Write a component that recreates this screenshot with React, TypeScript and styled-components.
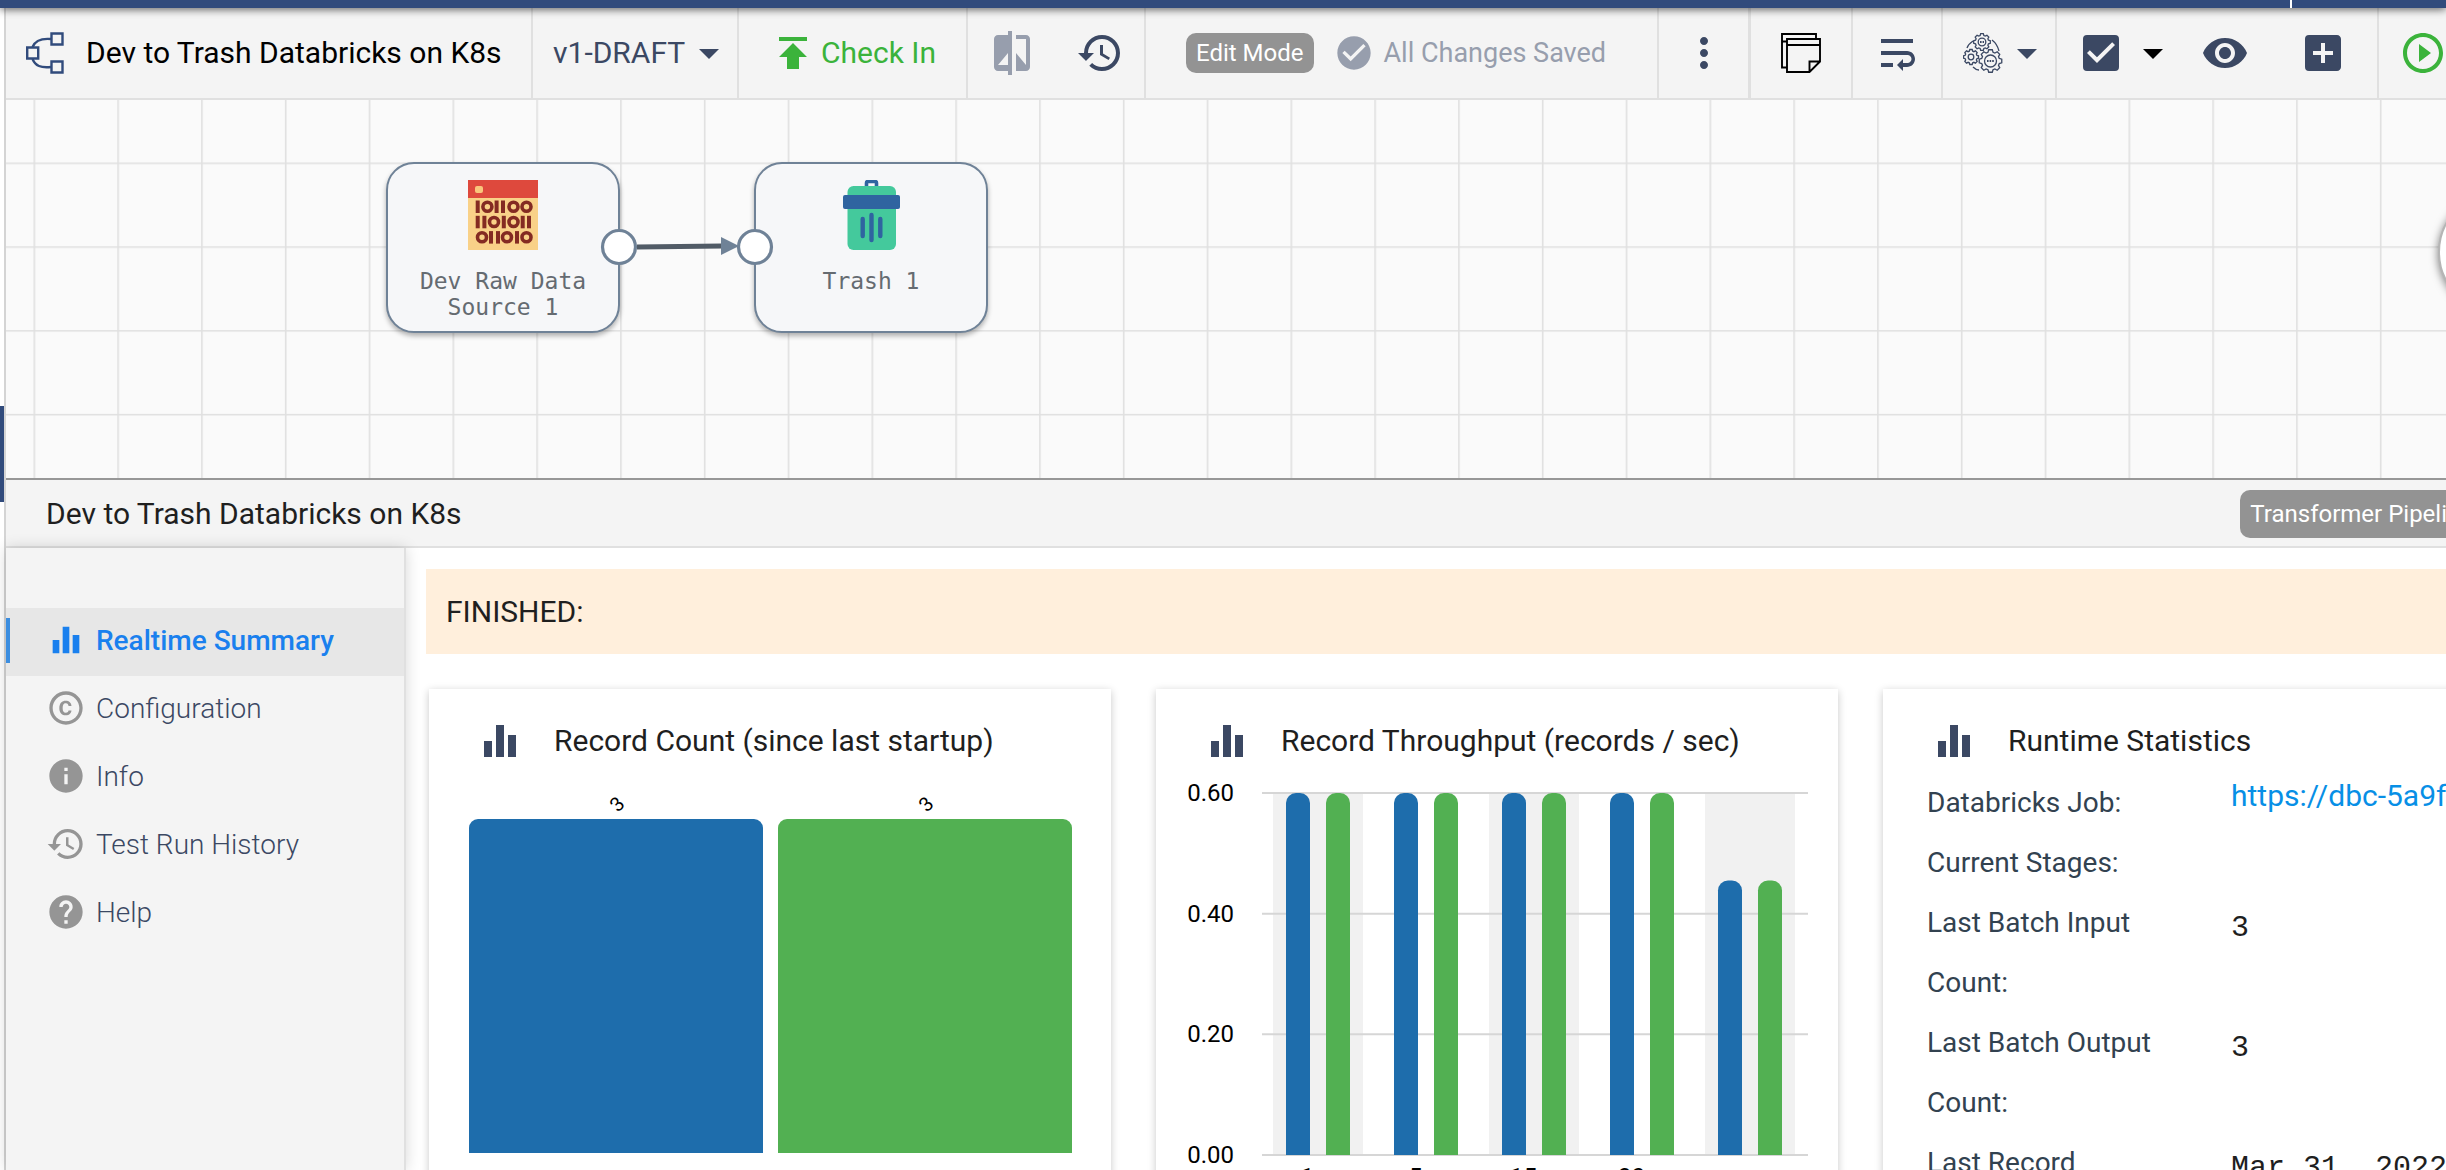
import React from 'react';
import styled, { createGlobalStyle, css } from 'styled-components';
import {
  MdAddBox,
  MdArrowDropDown,
  MdCheckBox,
  MdCheckCircle,
  MdCompare,
  MdCopyright,
  MdEqualizer,
  MdHelp,
  MdHistory,
  MdInfo,
  MdMoreVert,
  MdPlayCircleOutline,
  MdPublish,
  MdVisibility,
  MdWrapText,
} from 'react-icons/md';

const color = {
  brand: '#314b7c',
  navy: '#3b4863',
  muted: '#979ead',
  green: '#3bb33b',
  line: '#e0e0e0',
  panel: '#f4f4f4',
  chip: '#939393',
  active: '#1a80ee',
  chartBlue: '#1e6dac',
  chartGreen: '#52b052',
  node: '#6f8297',
};

const GlobalStyle = createGlobalStyle`
  *, *::before, *::after { box-sizing: border-box; }
  html, body { margin: 0; overflow: hidden; }
  body { font-family: Roboto, "Liberation Sans", sans-serif; font-size: 30px; color: #1f1f1f; background: #fff; }
  button { font: inherit; color: inherit; background: none; border: 0; padding: 0; margin: 0; cursor: pointer; }
  svg { display: block; flex-shrink: 0; }
`;

const Shell = styled.div`
  display: flex;
  flex-direction: column;
  height: 100vh;
  overflow: hidden;
`;

const TopBar = styled.header`
  display: flex;
  justify-content: flex-end;
  flex-shrink: 0;
  height: 8px;
  padding-right: 154px;
  background: ${color.brand};
  box-shadow: 0 1px 8px rgba(0, 0, 0, 0.7);
  z-index: 2;
`;

const TopBarMark = styled.span`
  width: 2px;
  background: #fff;
`;

const Body = styled.div`
  display: flex;
  flex: 1;
  min-height: 0;
`;

const Rail = styled.div`
  flex-shrink: 0;
  width: 6px;
  padding-top: 398px;
  border-right: 2px solid #d4d4d4;
  background: #fff;
`;

const RailMarker = styled.div`
  height: 96px;
  background: ${color.brand};
`;

const Workspace = styled.main`
  display: flex;
  flex-direction: column;
  flex: 1 0 auto;
  min-width: 2600px;
`;

const Toolbar = styled.div`
  display: flex;
  flex-shrink: 0;
  height: 92px;
  background: ${color.panel};
  border-bottom: 2px solid ${color.line};
`;

const Group = styled.div<{ $width?: number; $start?: number; $gap?: number; $edge?: number }>`
  display: flex;
  align-items: center;
  flex-shrink: 0;
  gap: ${(p) => p.$gap ?? 0}px;
  width: ${(p) => (p.$width ? `${p.$width}px` : 'auto')};
  ${(p) =>
    p.$start
      ? css`
          padding-left: ${p.$start}px;
        `
      : css`
          justify-content: center;
        `}
  border-right: ${(p) => p.$edge ?? 2}px solid ${color.line};
`;

const PipelineTitle = styled.h1`
  margin: 0;
  font-size: 30px;
  font-weight: 400;
  line-height: 40px;
  color: #000;
  white-space: nowrap;
`;

const ToolButton = styled.button<{ $color?: string; $gap?: number; $push?: number }>`
  display: flex;
  align-items: center;
  gap: ${(p) => p.$gap ?? 0}px;
  margin-left: ${(p) => p.$push ?? 0}px;
  line-height: 40px;
  color: ${(p) => p.$color ?? color.navy};
  white-space: nowrap;
`;

const Chip = styled.span<{ $tall?: boolean }>`
  padding: 0 10px;
  border-radius: 10px;
  background: ${color.chip};
  color: #fff;
  font-size: 24px;
  line-height: ${(p) => (p.$tall ? 48 : 40)}px;
  white-space: nowrap;
`;

const SaveState = styled.span`
  display: flex;
  align-items: center;
  gap: 10px;
  font-size: 27px;
  color: ${color.muted};
  white-space: nowrap;
`;

const Canvas = styled.section`
  position: relative;
  flex-shrink: 0;
  height: 378px;
  background: #fafafa;
  overflow: hidden;
`;

const CanvasLayer = styled.svg`
  position: absolute;
  inset: 0;
  width: 100%;
  height: 100%;
`;

const Node = styled.button<{ $x: number; $y: number }>`
  position: absolute;
  left: ${(p) => p.$x}px;
  top: ${(p) => p.$y}px;
  display: flex;
  flex-direction: column;
  align-items: center;
  gap: 18px;
  width: 234px;
  height: 171px;
  padding-top: 16px;
  border: 2px solid ${color.node};
  border-radius: 28px;
  background: #f6f7f9;
  box-shadow: 0 3px 5px rgba(0, 0, 0, 0.3);
`;

const NodeLabel = styled.span`
  width: 190px;
  font-family: "DejaVu Sans Mono", monospace;
  font-size: 23px;
  line-height: 26px;
  color: #656b71;
`;

const PanButton = styled.button`
  position: absolute;
  top: 92px;
  right: 48px;
  display: flex;
  align-items: center;
  width: 120px;
  height: 120px;
  padding-left: 6px;
  border: 2px solid #b5b5b5;
  border-radius: 50%;
  background: #fff;
  box-shadow: 0 2px 8px rgba(0, 0, 0, 0.5);
`;

const DetailHeader = styled.div`
  display: flex;
  align-items: center;
  justify-content: space-between;
  flex-shrink: 0;
  height: 70px;
  padding: 2px 123px 0 40px;
  border-top: 2px solid #979797;
  border-bottom: 2px solid ${color.line};
  background: ${color.panel};
`;

const DetailTitle = styled.h2`
  margin: 0;
  font-size: 30px;
  font-weight: 400;
  line-height: 40px;
`;

const Detail = styled.div`
  display: flex;
  flex: 1;
  min-height: 0;
`;

const SideNav = styled.nav`
  flex-shrink: 0;
  width: 400px;
  padding-top: 60px;
  border-right: 2px solid ${color.line};
  background: ${color.panel};
  box-shadow: 0 0 14px rgba(0, 0, 0, 0.16);
`;

const NavLink = styled.a<{ $active?: boolean }>`
  display: flex;
  align-items: center;
  gap: 10px;
  height: 68px;
  padding-bottom: 4px;
  font-size: 28px;
  font-weight: ${(p) => (p.$active ? 500 : 300)};
  color: ${(p) => (p.$active ? color.active : color.navy)};
  background: ${(p) => (p.$active ? '#e7e7e7' : 'transparent')};
  text-decoration: none;

  &::before {
    content: '';
    width: 4px;
    height: 45px;
    margin-right: 26px;
    background: ${(p) => (p.$active ? '#3c8ee0' : 'transparent')};
  }

  svg {
    color: ${(p) => (p.$active ? color.active : '#959595')};
  }
`;

const Content = styled.div`
  flex: 1;
  min-width: 0;
  padding: 21px 20px;
  overflow: hidden;
`;

const Alert = styled.div`
  padding: 0 20px;
  background: #ffefdc;
  line-height: 85px;
`;

const Cards = styled.div`
  display: grid;
  grid-template-columns: repeat(3, 1fr);
  gap: 45px;
  padding: 35px 21px 0 3px;
`;

const Card = styled.article`
  min-width: 0;
  background: #fff;
  box-shadow: 0 2px 8px rgba(0, 0, 0, 0.22);
`;

const CardHeader = styled.header`
  display: flex;
  align-items: center;
  gap: 30px;
  height: 83px;
  padding: 28px 47px 7px;
  color: ${color.navy};
`;

const CardTitle = styled.h3`
  margin: 0;
  font-size: 30px;
  font-weight: 400;
  line-height: 40px;
  color: #1f1f1f;
  white-space: nowrap;
`;

const Chart = styled.svg`
  width: 100%;
  font-size: 24px;
`;

const Stats = styled.dl`
  display: grid;
  grid-template-columns: 260px 1fr;
  column-gap: 44px;
  margin: 0;
  padding: 1px 0 0 44px;
`;

const StatLabel = styled.dt`
  font-size: 28px;
  line-height: 60px;
  color: #324250;
`;

const StatValue = styled.dd`
  margin: 0;
  overflow: hidden;
  font-family: "Liberation Mono", monospace;
  line-height: 70px;
  white-space: nowrap;
`;

const JobLink = styled.a`
  display: block;
  font-family: Roboto, "Liberation Sans", sans-serif;
  line-height: 46px;
  color: #078fe6;
  text-decoration: none;
`;

const PipelineIcon = () => (
  <svg width="38" height="42" viewBox="0 0 38 42" fill="none" stroke={color.brand} strokeWidth="2.4">
    <path d="M25 7C14 6 9 9 6.500 15M6.500 27c3 7 8 9 18.500 8" />
    <path d="M25.500 1.500h11v11h-11zM1.200 15.500h11v11h-11zM25.500 29.500h11v11h-11z" />
  </svg>
);

const NotesIcon = () => (
  <svg width="40" height="40" viewBox="0 0 40 40" fill="none" stroke="#000" strokeWidth="1.900">
    <path d="M6 34.500H1V1h34v5M1 8.500h5" />
    <path d="M6 6h33v22.500L28.500 39H6zM6 12h33M28.500 39V28.500H39" />
  </svg>
);

const gearPath = (cx: number, cy: number, r: number, teeth: number) => {
  const points: string[] = [];
  for (let i = 0; i < teeth; i += 1) {
    [-0.36, -0.2, 0.2, 0.36].forEach((offset, k) => {
      const angle = ((i + offset) / teeth) * Math.PI * 2;
      const radius = k === 1 || k === 2 ? r : r * 0.8;
      points.push(`${(cx + Math.cos(angle) * radius).toFixed(2)} ${(cy + Math.sin(angle) * radius).toFixed(2)}`);
    });
  }
  return `M${points.join('L')}Z`;
};

const GearsIcon = () => (
  <svg width="40" height="40" viewBox="0 0 40 40" fill="none" stroke={color.navy} strokeWidth="1.300">
    <path d={gearPath(19, 9, 8.4, 8)} />
    <circle cx="19" cy="9" r="3.800" />
    <path d={gearPath(8, 24, 7.600, 8)} />
    <circle cx="8" cy="24" r="2.800" />
    <path d={gearPath(27.500, 28, 11.400, 8)} />
    <circle cx="27.500" cy="28" r="6" />
    <path d="M4 15c1-3 3-5 6-7M29 7c4 3 6 7 7 11M10 34c2 2 4 3 6 3" />
    <path d="M17 9h4M24 28h7" strokeWidth="1.800" strokeDasharray="1.600 1" />
  </svg>
);

type Glyph = ['I' | 'O', number];
const binaryRows: Glyph[][] = [
  [['I', 9.7], ['O', 19.4], ['I', 28.6], ['I', 35], ['O', 45.5], ['O', 58.5]],
  [['I', 9.7], ['I', 16.4], ['O', 26], ['I', 35.8], ['O', 45.5], ['I', 54.7], ['I', 61]],
  [['O', 14], ['I', 23], ['I', 30], ['O', 39], ['I', 49], ['O', 58.5]],
];

const RawDataIcon = () => (
  <svg width="70" height="70" viewBox="0 0 70 70">
    <rect width="70" height="70" fill="#f9d188" />
    <rect width="70" height="18" fill="#de493d" />
    <rect x="7" y="6" width="8" height="7" rx="2" fill="#f9c67c" />
    {binaryRows.map((row, r) =>
      row.map(([kind, x]) =>
        kind === 'I' ? (
          <rect key={`${r}-${x}`} x={x - 2} y={20.5 + r * 15.3} width="4" height="12.500" fill="#842b22" />
        ) : (
          <circle key={`${r}-${x}`} cx={x} cy={26.7 + r * 15.3} r="4.500" fill="none" stroke="#842b22" strokeWidth="3.600" />
        ),
      ),
    )}
  </svg>
);

const TrashIcon = () => (
  <svg width="57" height="70" viewBox="0 0 57 70">
    <rect x="23.500" y="1.500" width="10" height="10" rx="1.500" fill="none" stroke="#2f64a0" strokeWidth="3.600" />
    <rect x="4.500" y="6" width="48.500" height="64" rx="6" fill="#44c99c" />
    <rect y="15" width="57" height="14" rx="2" fill="#2f64a0" />
    <path d="M19.700 39v17M28.500 35v25M37.300 39v17" stroke="#2f64a0" strokeWidth="4.400" strokeLinecap="round" />
  </svg>
);

const PanIcon = () => (
  <svg width="100" height="100" viewBox="0 0 100 100" fill="none" stroke="#555" strokeWidth="4">
    <path d="M8 44l-8 6 8 6M92 44l8 6-8 6M44 8l6-8 6 8M44 92l6 8 6-8" />
  </svg>
);

const GridLines = () => (
  <CanvasLayer aria-hidden="true">
    <defs>
      <pattern id="grid" x="27.500" y="62.500" width="83.800" height="83.800" patternUnits="userSpaceOnUse">
        <path d="M.8 0v83.800M0 .8h83.800" stroke="#e0e0e0" strokeWidth="1.600" />
      </pattern>
    </defs>
    <rect width="100%" height="100%" fill="url(#grid)" />
  </CanvasLayer>
);

const Connection = () => (
  <CanvasLayer aria-hidden="true" pointerEvents="none">
    <path d="M631 147L716 146" stroke="#515b66" strokeWidth="5" />
    <path d="M715 137l18 9-18 9z" fill={color.node} />
    <circle cx="613" cy="147" r="16.500" fill="#fff" stroke={color.node} strokeWidth="3.200" />
    <circle cx="749" cy="147" r="16.500" fill="#fff" stroke={color.node} strokeWidth="3.200" />
  </CanvasLayer>
);

const roundedBar = (x: number, y: number, w: number, bottom: number, r: number) =>
  `M${x} ${bottom}V${y + r}a${r} ${r} 0 0 1 ${r} ${-r}h${w - 2 * r}a${r} ${r} 0 0 1 ${r} ${r}V${bottom}z`;

const RecordCountChart = () => (
  <Chart viewBox="0 0 682 440" role="img" aria-label="Record Count">
    {[
      { x: 40, fill: color.chartBlue },
      { x: 349, fill: color.chartGreen },
    ].map((bar) => (
      <g key={bar.x}>
        <path d={roundedBar(bar.x, 47, 294, 381, 9)} fill={bar.fill} />
        <text transform={`translate(${bar.x + 149} 41) rotate(-45)`} fontSize="20" fill="#000">
          3
        </text>
      </g>
    ))}
  </Chart>
);

const rates = [
  { label: '1m', value: 0.6 },
  { label: '5m', value: 0.6 },
  { label: '15m', value: 0.6 },
  { label: '30m', value: 0.6 },
  { label: '', value: 0.455 },
];
const axisBottom = 383;
const rateY = (value: number) => axisBottom - (value / 0.6) * 362;

const ThroughputChart = () => (
  <Chart viewBox="0 0 682 440" role="img" aria-label="Record Throughput">
    {rates.map((_, i) => i % 2 === 0 && <rect key={i} x={117 + i * 108} y="21" width="90" height="362" fill="#f1f1f1" />)}
    {[0.6, 0.4, 0.2, 0].map((tick) => (
      <g key={tick}>
        <path d={`M106 ${rateY(tick)}h546`} stroke="#d6d6d6" strokeWidth="2" />
        <text x="78" y={rateY(tick) + 8} textAnchor="end" fill="#000">
          {tick.toFixed(2)}
        </text>
      </g>
    ))}
    {rates.map((rate, i) => (
      <g key={i}>
        <path d={roundedBar(130 + i * 108, rateY(rate.value), 24, axisBottom, 10)} fill={color.chartBlue} />
        <path d={roundedBar(170 + i * 108, rateY(rate.value), 24, axisBottom, 10)} fill={color.chartGreen} />
        {rate.label && (
          <text x={162 + i * 108} y="413" textAnchor="middle" fill="#000">
            {rate.label}
          </text>
        )}
      </g>
    ))}
  </Chart>
);

const navItems = [
  { label: 'Realtime Summary', Icon: MdEqualizer, active: true },
  { label: 'Configuration', Icon: MdCopyright },
  { label: 'Info', Icon: MdInfo },
  { label: 'Test Run History', Icon: MdHistory },
  { label: 'Help', Icon: MdHelp },
];

const StatCard = ({ title, children }: { title: string; children: React.ReactNode }) => (
  <Card>
    <CardHeader>
      <MdEqualizer size={48} />
      <CardTitle>{title}</CardTitle>
    </CardHeader>
    {children}
  </Card>
);

export default function App() {
  return (
    <Shell>
      <GlobalStyle />
      <TopBar>
        <TopBarMark />
      </TopBar>
      <Body>
        <Rail>
          <RailMarker />
        </Rail>
        <Workspace>
          <Toolbar>
            <Group $width={527} $start={20} $gap={22}>
              <PipelineIcon />
              <PipelineTitle>Dev to Trash Databricks on K8s</PipelineTitle>
            </Group>
            <Group $width={206} $start={20}>
              <ToolButton aria-haspopup="menu">
                v1-DRAFT
                <MdArrowDropDown size={48} />
              </ToolButton>
            </Group>
            <Group $width={229}>
              <ToolButton $color={color.green} $gap={4}>
                <MdPublish size={48} />
                Check In
              </ToolButton>
            </Group>
            <Group $width={178} $gap={40}>
              <ToolButton $color={color.muted} aria-label="Compare versions">
                <MdCompare size={48} />
              </ToolButton>
              <ToolButton aria-label="History">
                <MdHistory size={48} />
              </ToolButton>
            </Group>
            <Group $width={513} $start={40} $gap={20}>
              <Chip>Edit Mode</Chip>
              <SaveState>
                <MdCheckCircle size={40} />
                All Changes Saved
              </SaveState>
            </Group>
            <Group $width={92} $edge={3}>
              <ToolButton aria-label="More">
                <MdMoreVert size={48} />
              </ToolButton>
            </Group>
            <Group $width={102}>
              <ToolButton aria-label="Notes">
                <NotesIcon />
              </ToolButton>
            </Group>
            <Group $width={90}>
              <ToolButton aria-label="Auto arrange">
                <MdWrapText size={48} />
              </ToolButton>
            </Group>
            <Group $width={114} $start={20}>
              <ToolButton aria-label="Settings">
                <GearsIcon />
                <MdArrowDropDown size={48} />
              </ToolButton>
            </Group>
            <Group $width={322} $start={20}>
              <ToolButton aria-label="Validate">
                <MdCheckBox size={48} />
              </ToolButton>
              <ToolButton $color="#000" $push={4} aria-label="Validate options">
                <MdArrowDropDown size={48} />
              </ToolButton>
              <ToolButton $push={24} aria-label="Preview">
                <MdVisibility size={48} />
              </ToolButton>
              <ToolButton $push={50} aria-label="Add stage">
                <MdAddBox size={48} />
              </ToolButton>
            </Group>
            <Group $start={20} $edge={0}>
              <ToolButton $color={color.green} aria-label="Run">
                <MdPlayCircleOutline size={48} />
              </ToolButton>
            </Group>
          </Toolbar>

          <Canvas>
            <GridLines />
            <Node $x={380} $y={62}>
              <RawDataIcon />
              <NodeLabel>Dev Raw Data Source 1</NodeLabel>
            </Node>
            <Node $x={748} $y={62}>
              <TrashIcon />
              <NodeLabel>Trash 1</NodeLabel>
            </Node>
            <Connection />
            <PanButton aria-label="Pan canvas">
              <PanIcon />
            </PanButton>
          </Canvas>

          <DetailHeader>
            <DetailTitle>Dev to Trash Databricks on K8s</DetailTitle>
            <Chip $tall>Transformer Pipeline</Chip>
          </DetailHeader>

          <Detail>
            <SideNav>
              {navItems.map(({ label, Icon, active }) => (
                <NavLink key={label} href="#" $active={active} aria-current={active ? 'page' : undefined}>
                  <Icon size={40} />
                  {label}
                </NavLink>
              ))}
            </SideNav>
            <Content>
              <Alert role="status">FINISHED:</Alert>
              <Cards>
                <StatCard title="Record Count (since last startup)">
                  <RecordCountChart />
                </StatCard>
                <StatCard title="Record Throughput (records / sec)">
                  <ThroughputChart />
                </StatCard>
                <StatCard title="Runtime Statistics">
                  <Stats>
                    <StatLabel>Databricks Job:</StatLabel>
                    <StatValue>
                      <JobLink href="#">https://dbc-5a9f</JobLink>
                    </StatValue>
                    <StatLabel>Current Stages:</StatLabel>
                    <StatValue />
                    <StatLabel>Last Batch Input Count:</StatLabel>
                    <StatValue>3</StatValue>
                    <StatLabel>Last Batch Output Count:</StatLabel>
                    <StatValue>3</StatValue>
                    <StatLabel>Last Record</StatLabel>
                    <StatValue>Mar 31, 2022</StatValue>
                  </Stats>
                </StatCard>
              </Cards>
            </Content>
          </Detail>
        </Workspace>
      </Body>
    </Shell>
  );
}
